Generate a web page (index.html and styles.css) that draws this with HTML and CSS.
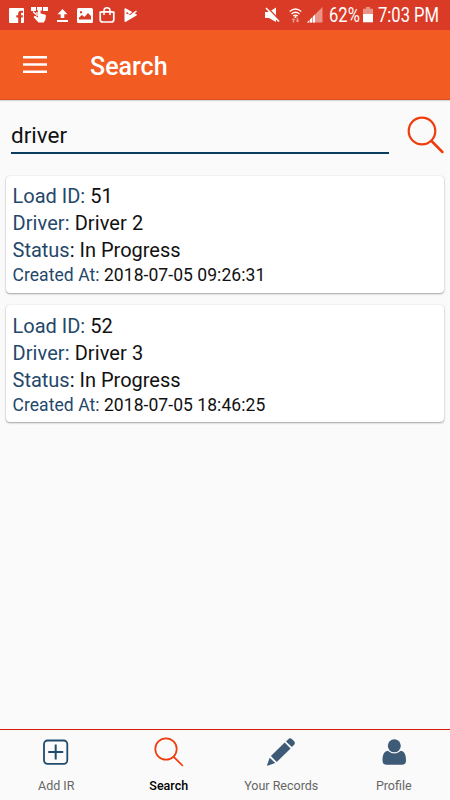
FILE: index.html
```html
<!DOCTYPE html>
<html lang="en">
<head>
<meta charset="utf-8">
<title>Search</title>
<link rel="stylesheet" href="styles.css">
</head>
<body>
<div class="app">
  <div class="status">
    <div class="notices">
      <svg width="15" height="15" viewBox="0 0 15 15"><path fill="#fff" fill-rule="evenodd" d="M1 0h13a1 1 0 0 1 1 1v13a1 1 0 0 1-1 1h-2V9.600h1.700l.3-2.300h-2V6c0-.8.300-1.200 1.100-1.200h.9V2.700h-1.700C10.300 2.700 9.200 4 9.200 5.700v1.600H7.300v2.300h1.900V15H1a1 1 0 0 1-1-1V1a1 1 0 0 1 1-1z"/></svg>
      <svg width="17" height="16" viewBox="0 0 17 16" fill="#fff"><path d="M0 0h5v4H0zM6 0h5v3.500H6zM12 0h5v4h-5z"/><path d="M7 3.500c0-1.600 2.600-1.600 2.600 0v3l4 .9c1 .2 1.400.8 1.300 1.700l-.6 4-1.600 2.400H7.500L2.900 10.500c-.7-1 .6-2.100 1.700-1.400L7 10.500z"/><path d="M2 4.500l3 3M6 5v4" stroke="#fff" stroke-width="1.300"/></svg>
      <svg class="upload" width="11" height="13" viewBox="0 0 11 13" fill="#fff"><path d="M5.500 0l5 5.300H7.300V9H3.700V5.300H.5zM0 11h11v2H0z"/></svg>
      <svg class="photo" width="16" height="15" viewBox="0 0 16 15"><path fill="#fff" fill-rule="evenodd" d="M1.500 0h13A1.500 1.500 0 0 1 16 1.500v12a1.500 1.500 0 0 1-1.500 1.500h-13A1.500 1.500 0 0 1 0 13.500v-12A1.500 1.500 0 0 1 1.500 0zM2 11.500h12V8L11 5 7.500 9 5 7l-3 2.500zM3 3.300v2h2v-2z"/></svg>
      <svg width="16" height="16" viewBox="0 0 16 16" fill="none" stroke="#fff"><path stroke-width="1.700" d="M3.500 4.800h9l2.300.5v7.200q0 2.500-2.500 2.500H3.700q-2.500 0-2.500-2.500V5.300z"/><path stroke-width="1.600" d="M5 8V3.700q0-2.900 3-2.900t3 2.900V8"/></svg>
      <svg class="play" width="13" height="14" viewBox="0 0 13 14"><path fill="#fff" d="M1 0l11.500 6.200q.8.600 0 1.200L1.500 14Q.5 14 .5 13V1z"/><path d="M2.500 4.500l3 3 5.500-5" fill="none" stroke="#da3b26" stroke-width="1.600"/><path d="M3.500 6l2.300 2.300L12.500 3" fill="none" stroke="#fff" stroke-width="1.500"/></svg>
    </div>
    <div class="system">
      <svg width="15" height="16" viewBox="0 0 15 16"><path fill="#fff" d="M0 5h4l7-4.500v14.500L4 11H0z"/><path d="M2 0l13 14" stroke="#da3b26" stroke-width="1.600"/><path d="M1 1l13 13.500" stroke="#fff" stroke-width="1.700"/></svg>
      <svg class="wifi" width="13" height="15" viewBox="0 0 13 15"><g fill="none" stroke="#fff" stroke-width="1.300"><path d="M.7 3.500q5.800-5 11.600 0M2.500 5.900q4-3.300 8 0M4.300 8q2.200-1.700 4.400 0"/></g><circle cx="6.500" cy="9" r="1.100" fill="#fff"/><path fill="#fff" opacity=".5" d="M4.500 10L2.500 12h1.300v2.500h1.400V12h1.300zM8.500 14.500l-2-2h1.300V10h1.400v2.500h1.300z"/></svg>
      <svg class="signal" width="16" height="16" viewBox="0 0 16 16"><path fill="#fff" opacity=".45" d="M15.500 0v15.500H0z"/><path fill="#fff" d="M0 15.500l2-2v2zM3 12.500l2-2v5H3zM6 9.500L8 7.500v8H6z"/></svg>
      <span class="percent">62%</span>
      <svg class="battery" width="10" height="16" viewBox="0 0 10 16"><path fill="#fff" opacity=".45" d="M3 0h4v1.700h3V7H0V1.700h3z"/><path fill="#fff" d="M0 7h10v8.300H0z"/></svg>
      <span class="clock">7:03 PM</span>
    </div>
  </div>
  <header class="bar">
    <svg width="24" height="18" viewBox="0 0 24 18" fill="#fff"><path d="M0 0h24v2.600H0zM0 7.200h24v2.600H0zM0 14.400h24V17H0z"/></svg>
    <h1>Search</h1>
  </header>
  <main>
    <div class="search">
      <div class="field">driver</div>
      <svg width="38" height="38" viewBox="0 0 38 38" fill="none" stroke="#f03c0c"><circle cx="15" cy="15" r="13.300" stroke-width="2.200"/><path d="M24.500 25l10.900 11" stroke-width="2.500" stroke-linecap="round"/></svg>
    </div>
    <article class="card">
      <p class="load"><b>Load ID:</b> 51</p>
      <p class="driver"><b>Driver:</b> Driver 2</p>
      <p class="state"><b>Status</b>: In Progress</p>
      <p class="created"><b>Created At:</b> 2018-07-05 09:26:31</p>
    </article>
    <article class="card">
      <p class="load"><b>Load ID:</b> 52</p>
      <p class="driver"><b>Driver:</b> Driver 3</p>
      <p class="state"><b>Status</b>: In Progress</p>
      <p class="created"><b>Created At:</b> 2018-07-05 18:46:25</p>
    </article>
  </main>
  <nav class="tabs">
    <div class="tab">
      <svg width="30" height="30" viewBox="0 0 30 30" fill="none" stroke="#1f4b6c"><rect x="3" y="3.500" width="23.300" height="23.300" rx="3.500" stroke-width="1.800"/><path d="M14.700 7.500v15M7.200 15h15" stroke-width="2"/></svg>
      <span>Add IR</span>
    </div>
    <div class="tab active">
      <svg width="30" height="30" viewBox="0 0 30 30" fill="none" stroke="#f03c0c" stroke-width="1.700"><circle cx="12" cy="12" r="10.700"/><path d="M19.700 19.800l8.700 8.700" stroke-linecap="round"/></svg>
      <span>Search</span>
    </div>
    <div class="tab">
      <svg width="30" height="30" viewBox="0 0 30 30" fill="#3d5a76"><path d="M22.300 2.200q1.700-1.700 3.500-.3l2.400 2.400q1.500 1.700 0 3.500l-2.300 2.300-5.900-5.700z"/><path d="M18.700 5.500l5.900 5.900L10.700 25 4.900 19.100z"/><path d="M3.700 20.700l5.500 5.400-7.700 2.600q-.7 0-.4-.8z"/></svg>
      <span>Your Records</span>
    </div>
    <div class="tab">
      <svg width="30" height="30" viewBox="0 0 30 30" fill="#3d5a76"><circle cx="15.300" cy="8.800" r="6.500"/><path d="M8.700 13.700Q15.300 19.200 21.900 13.700C25.800 14.500 27 18 27 23.500q0 4.200-4 4.200H7.500q-4 0-4-4.200c0-5.500 1.300-9 5.200-9.800z"/></svg>
      <span>Profile</span>
    </div>
  </nav>
</div>
</body>
</html>
```

FILE: styles.css
```css
* { box-sizing: border-box; }
body { margin: 0; font-family: Roboto, sans-serif; background: #fafafa; color: #111; }
h1, p { margin: 0; }
svg { display: block; flex: none; }
.app { width: 450px; height: 800px; display: flex; flex-direction: column; overflow: hidden; }
.status { height: 30px; flex: none; background: #da3b26; color: #fff; display: flex; justify-content: space-between; padding: 0 10px 0 9px; }
.notices, .system { display: flex; align-items: center; }
.notices { gap: 6.500px; }
.upload, .photo { margin-left: 2.500px; }
.play { margin-left: 2px; }
.system { font-size: 19.500px; line-height: 30px; white-space: nowrap; }
.system span { display: block; transform-origin: left center; transform: scaleX(.85); padding-top: 2px; }
.wifi { margin-left: 9px; }
.signal { margin-left: 5px; }
.percent { width: 30px; margin-left: 6px; }
.battery { margin-left: 4px; }
.clock { width: 62px; margin-left: 5px; }
.bar { height: 70px; flex: none; background: #f25c22; color: #fff; display: flex; align-items: center; padding: 1px 23px 0; border-bottom: 1px solid #e44f20; box-shadow: 0 1px 1px #cfd8da; }
.bar h1 { font-size: 25px; font-weight: 500; line-height: 30px; margin-left: 43px; padding-top: 3px; }
main { flex: 1; padding: 15px 6px 0; }
.search { display: flex; justify-content: space-between; height: 60.500px; padding-left: 5px; }
.field { width: 378px; height: 39px; border-bottom: 2px solid #0b3c5d; font-size: 22.500px; line-height: 40px; }
.search svg { margin: 1px -.5px 0 0; }
.card { height: 117px; margin-bottom: 12.500px; padding: 7.500px 6.500px; background: #fff; border-radius: 4px; box-shadow: 0 1px 2px rgba(0,0,0,.34), 0 0 1px rgba(0,0,0,.18); font-size: 20px; line-height: 27px; white-space: nowrap; }
.card b { font-weight: 400; color: #24486a; }
.card .driver { letter-spacing: .08px; }
.card .created { font-size: 17.500px; line-height: 23px; letter-spacing: .06px; }
.tabs { height: 71px; flex: none; border-top: 1px solid #d9190c; display: flex; }
.tab { flex: 1; display: flex; flex-direction: column; align-items: center; padding-top: 7px; font-size: 12.500px; line-height: 16px; color: #666; gap: 11px; }
.active { color: #000; font-weight: 500; }
```
